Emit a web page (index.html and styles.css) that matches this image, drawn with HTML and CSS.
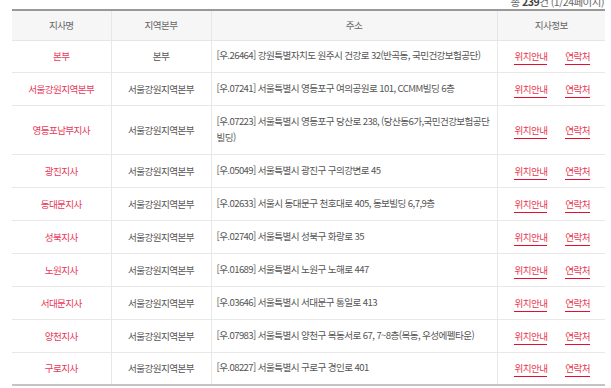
FILE: index.html
```html
<!DOCTYPE html>
<html lang="ko">
<head>
<meta charset="utf-8">
<link rel="stylesheet" href="styles.css">
</head>
<body>
<div class="wrap">
  <div class="summary"><span>총 <b>239</b>건 (1/24페이지)</span></div>
  <table class="list">
    <colgroup>
      <col class="c1"><col class="c2"><col class="c3"><col class="c4">
    </colgroup>
    <thead>
      <tr><th>지사명</th><th>지역본부</th><th>주소</th><th>지사정보</th></tr>
    </thead>
    <tbody>
      <tr><td class="name">본부</td><td>본부</td><td class="addr">[우.26464] 강원특별자치도 원주시 건강로 32(반곡동, 국민건강보험공단)</td><td class="info"><a href="#">위치안내</a><a href="#">연락처</a></td></tr>
      <tr><td class="name">서울강원지역본부</td><td>서울강원지역본부</td><td class="addr">[우.07241] 서울특별시 영등포구 여의공원로 101, CCMM빌딩 6층</td><td class="info"><a href="#">위치안내</a><a href="#">연락처</a></td></tr>
      <tr class="tall"><td class="name">영등포남부지사</td><td>서울강원지역본부</td><td class="addr">[우.07223] 서울특별시 영등포구 당산로 238, (당산동6가,국민건강보험공단 빌딩)</td><td class="info"><a href="#">위치안내</a><a href="#">연락처</a></td></tr>
      <tr><td class="name">광진지사</td><td>서울강원지역본부</td><td class="addr">[우.05049] 서울특별시 광진구 구의강변로 45</td><td class="info"><a href="#">위치안내</a><a href="#">연락처</a></td></tr>
      <tr><td class="name">동대문지사</td><td>서울강원지역본부</td><td class="addr">[우.02633] 서울시 동대문구 천호대로 405, 동보빌딩 6,7,9층</td><td class="info"><a href="#">위치안내</a><a href="#">연락처</a></td></tr>
      <tr><td class="name">성북지사</td><td>서울강원지역본부</td><td class="addr">[우.02740] 서울특별시 성북구 화랑로 35</td><td class="info"><a href="#">위치안내</a><a href="#">연락처</a></td></tr>
      <tr><td class="name">노원지사</td><td>서울강원지역본부</td><td class="addr">[우.01689] 서울특별시 노원구 노해로 447</td><td class="info"><a href="#">위치안내</a><a href="#">연락처</a></td></tr>
      <tr><td class="name">서대문지사</td><td>서울강원지역본부</td><td class="addr">[우.03646] 서울특별시 서대문구 통일로 413</td><td class="info"><a href="#">위치안내</a><a href="#">연락처</a></td></tr>
      <tr><td class="name">양천지사</td><td>서울강원지역본부</td><td class="addr">[우.07983] 서울특별시 양천구 목동서로 67, 7~8층(목동, 우성에펠타운)</td><td class="info"><a href="#">위치안내</a><a href="#">연락처</a></td></tr>
      <tr><td class="name">구로지사</td><td>서울강원지역본부</td><td class="addr">[우.08227] 서울특별시 구로구 경인로 401</td><td class="info"><a href="#">위치안내</a><a href="#">연락처</a></td></tr>
    </tbody>
  </table>
</div>
</body>
</html>
```
FILE: styles.css
```css
* { box-sizing: border-box; }
body {
  margin: 0;
  background: #fff;
  font-family: "Noto Sans CJK KR", "Noto Sans", sans-serif;
  color: #444;
}
.wrap {
  padding: 0 6px 0 12px;
}
.summary {
  height: 9px;
  text-align: right;
  font-size: 10.5px;
  line-height: 3px;
  letter-spacing: -0.5px;
  color: #666;
  padding-right: 1px;
  white-space: nowrap;
}
.summary b { color: #444; }
.list {
  width: 593px;
  border-collapse: collapse;
  table-layout: fixed;
  border-top: 2px solid #999;
  border-bottom: 2px solid #c4c4c4;
  font-size: 9.6px;
  letter-spacing: -0.6px;
}
.c1 { width: 99px; }
.c2 { width: 100px; }
.c3 { width: 286px; }
.c4 { width: 108px; }
.list th {
  height: 30px;
  background: #f6f6f6;
  font-weight: 400;
  color: #666;
  border-bottom: 1px solid #e6e6e6;
  border-left: 1px solid #e6e6e6;
  padding: 0;
}
.list td {
  height: 32.9px;
  text-align: center;
  border-top: 1px solid #e8e8e8;
  border-left: 1px solid #e8e8e8;
  padding: 0 4px;
  color: #555;
  line-height: 16px;
}
.list th:first-child, .list td:first-child { border-left: none; }
.list tr.tall td { height: 49px; }
.list td.name { color: #e8385a; }
.list td.addr { text-align: left; padding: 0 6px 2px 5px; color: #555; }
.list td.info { padding: 0 0 0 2px; white-space: nowrap; }
.info a {
  color: #e8384f;
  text-decoration: none;
  border-bottom: 1px solid #e60e2e;
  padding-bottom: 1px;
  margin: 0 9px;
}
```
